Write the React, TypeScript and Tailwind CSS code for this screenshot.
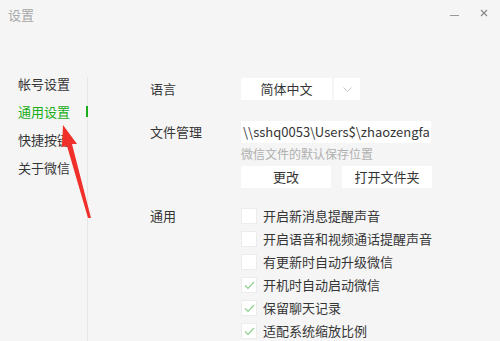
import React from "react";

const font = { fontFamily: '"Noto Sans CJK SC", "Noto Sans", sans-serif' };

const navItems = ["帐号设置", "通用设置", "快捷按键", "关于微信"];

const options = [
  { label: "开启新消息提醒声音", on: false },
  { label: "开启语音和视频通话提醒声音", on: false },
  { label: "有更新时自动升级微信", on: false },
  { label: "开机时自动启动微信", on: true },
  { label: "保留聊天记录", on: true },
  { label: "适配系统缩放比例", on: true },
];

function Check({ on }: { on: boolean }) {
  return (
    <div className="w-[16px] h-[16px] bg-white border border-[#ececec] flex items-center justify-center">
      {on && (
        <svg width="11" height="9" viewBox="0 0 11 9">
          <polyline points="1,4.5 4,7.5 10,1" fill="none" stroke="#8fcf8f" strokeWidth="1.2" />
        </svg>
      )}
    </div>
  );
}

export default function App() {
  return (
    <div className="relative w-[500px] h-[341px] bg-[#f5f5f5] overflow-hidden text-[#353535]" style={font}>
      {/* title bar */}
      <div className="h-[30px] flex items-start justify-between pl-[8px] pr-[12px] pt-[6px]">
        <span className="text-[13px] text-[#a8a8a8] leading-[18px]">设置</span>
        <div className="flex items-center gap-[21px] text-[#999] pt-[1px]">
          <div className="w-[9px] h-[1px] bg-[#999] mt-[6px]" />
          <svg width="8" height="8" viewBox="0 0 8 8" className="mt-[2px]">
            <path d="M1 1 L7 7 M7 1 L1 7" stroke="#888" strokeWidth="1.2" />
          </svg>
        </div>
      </div>

      <div className="flex">
        {/* sidebar */}
        <div className="w-[88px] pt-[40px] relative">
          {navItems.map((n, i) => (
            <div
              key={n}
              className={`h-[28px] pl-[18px] text-[13px] leading-[28px] ${i === 1 ? "text-[#1aad19]" : "text-[#353535]"}`}
            >
              {n}
            </div>
          ))}
          <div className="absolute right-0 top-[47px] bottom-[-300px] w-[1px] bg-[#e6e6e6]" />
          <div className="absolute right-0 top-[76px] w-[2px] h-[11px] bg-[#1aad19]" />
        </div>

        {/* content */}
        <div className="pl-[62px] pt-[48px] text-[13px]">
          <div className="flex items-center h-[22px]">
            <div className="w-[91px]">语言</div>
            <div className="flex h-[22px]">
              <div className="w-[91px] bg-white flex items-center justify-center">简体中文</div>
              <div className="w-[26px] bg-white ml-[2px] flex items-center justify-center">
                <svg width="9" height="5" viewBox="0 0 9 5">
                  <polyline points="0.5,0.5 4.5,4.5 8.5,0.5" fill="none" stroke="#c8c8c8" strokeWidth="1" />
                </svg>
              </div>
            </div>
          </div>

          <div className="flex mt-[21px]">
            <div className="w-[91px] leading-[22px]">文件管理</div>
            <div>
              <div className="w-[190px] h-[22px] bg-white overflow-hidden whitespace-nowrap leading-[22px] pl-[2px] text-[13px]">
                {"\\\\sshq0053\\Users$\\zhaozengfa"}
              </div>
              <div className="text-[#b0b0b0] text-[12px] leading-[18px] mt-[2px]">微信文件的默认保存位置</div>
              <div className="flex gap-[11px] mt-[3px]">
                <div className="w-[90px] h-[22px] bg-white flex items-center justify-center">更改</div>
                <div className="w-[90px] h-[22px] bg-white flex items-center justify-center">打开文件夹</div>
              </div>
            </div>
          </div>

          <div className="flex mt-[20px]">
            <div className="w-[91px] leading-[16px]">通用</div>
            <div className="flex flex-col gap-[7px]">
              {options.map((o) => (
                <div key={o.label} className="flex items-center h-[16px] gap-[6px]">
                  <Check on={o.on} />
                  <span className="leading-[16px]">{o.label}</span>
                </div>
              ))}
            </div>
          </div>
        </div>
      </div>

      {/* red annotation arrow */}
      <svg className="absolute left-0 top-0 pointer-events-none" width="500" height="341">
        <polygon points="63,125 77,144 72,144 91,218 88,218 67,146 62,147" fill="#f0302a" />
      </svg>
    </div>
  );
}
